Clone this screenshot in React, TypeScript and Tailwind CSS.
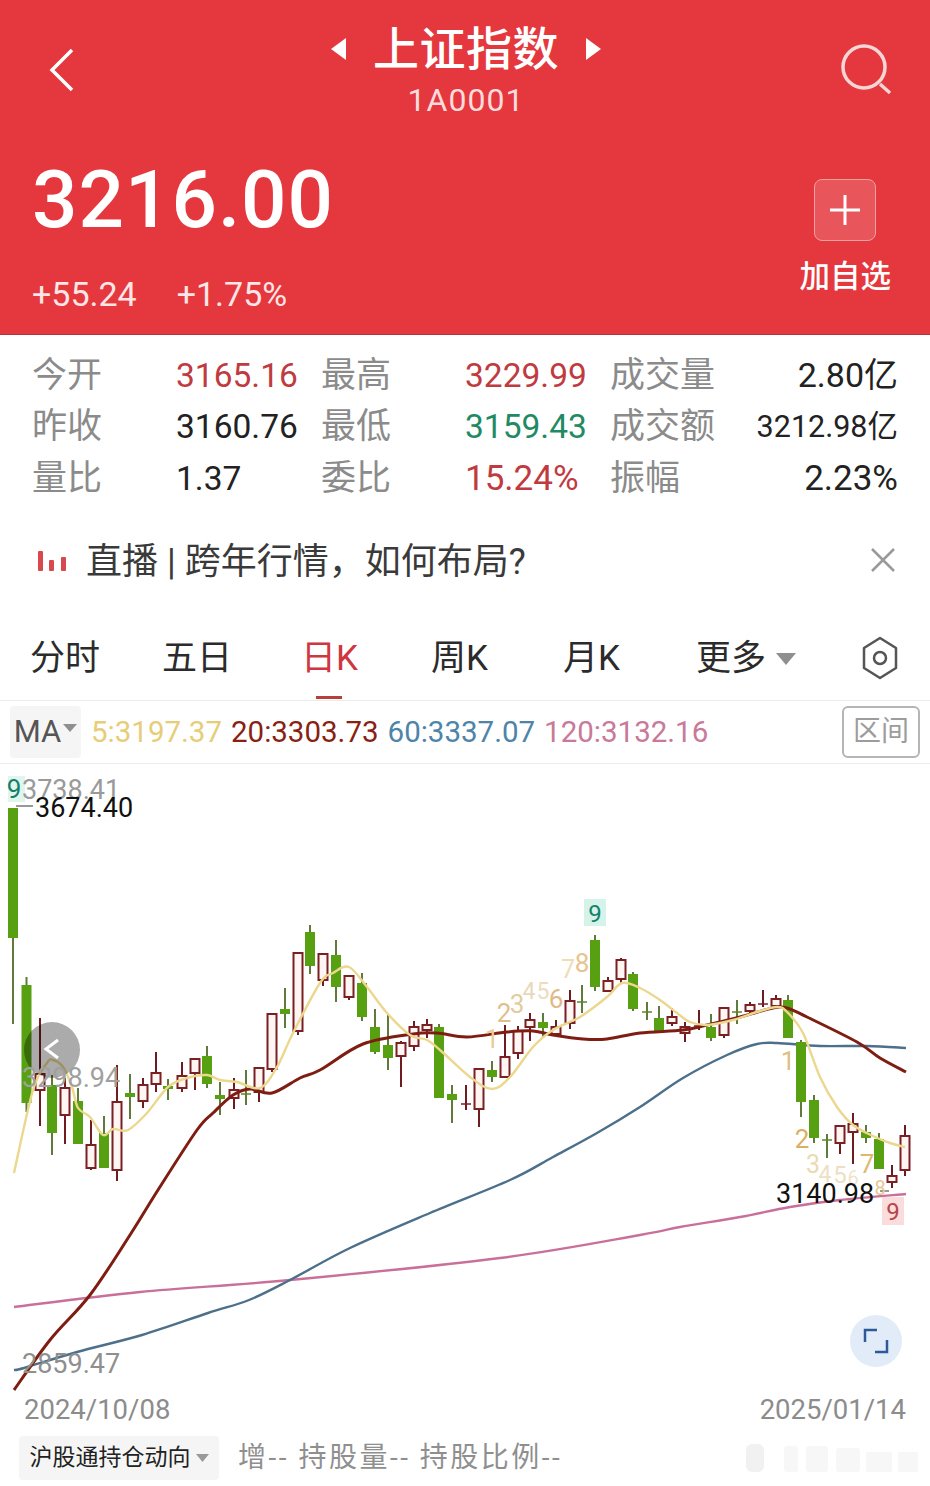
import React from "react";

const CJK = '"Noto Sans CJK SC", "Noto Sans", sans-serif';

type C = [number, number, number, number, number, "r" | "g"];
const candles: C[] = [
  [13, 808, 1024, 808, 938, "g"],
  [26.5, 977, 1112, 985, 1103, "g"],
  [40, 1018, 1126, 1074, 1090, "r"],
  [52, 1075, 1155, 1085, 1133, "g"],
  [65, 1078, 1144, 1088, 1115, "r"],
  [78, 1088, 1144, 1101, 1144, "g"],
  [91, 1120, 1170, 1145, 1168, "r"],
  [104, 1116, 1168, 1133, 1168, "g"],
  [117, 1065, 1181, 1102, 1170, "r"],
  [130, 1074, 1119, 1093, 1097, "g"],
  [143, 1078, 1108, 1085, 1101, "r"],
  [156, 1052, 1092, 1073, 1084, "r"],
  [168, 1079, 1100, 1086, 1089, "g"],
  [182, 1062, 1092, 1076, 1088, "r"],
  [195, 1059, 1090, 1059, 1073, "r"],
  [207, 1046, 1088, 1056, 1084, "g"],
  [220, 1082, 1115, 1095, 1099, "g"],
  [234, 1078, 1109, 1090, 1098, "r"],
  [246, 1070, 1105, 1094, 1095, "g"],
  [259, 1068, 1102, 1068, 1092, "r"],
  [272, 1014, 1072, 1014, 1069, "r"],
  [285, 988, 1028, 1009, 1014, "g"],
  [298, 953, 1035, 953, 1031, "r"],
  [310, 925, 974, 932, 966, "g"],
  [323, 954, 986, 954, 980, "r"],
  [336, 940, 1002, 955, 987, "g"],
  [349, 976, 1000, 976, 997, "r"],
  [362, 973, 1021, 983, 1017, "g"],
  [375, 1009, 1054, 1027, 1052, "g"],
  [388, 1014, 1070, 1045, 1058, "g"],
  [401, 1041, 1087, 1043, 1056, "r"],
  [414, 1021, 1051, 1027, 1046, "r"],
  [427, 1019, 1038, 1025, 1030, "r"],
  [439, 1024, 1098, 1027, 1098, "g"],
  [452, 1085, 1123, 1094, 1100, "g"],
  [466, 1085, 1110, 1104, 1105, "r"],
  [479, 1068, 1127, 1069, 1109, "r"],
  [492, 1061, 1082, 1070, 1077, "g"],
  [505, 1025, 1078, 1057, 1077, "r"],
  [518, 1026, 1059, 1031, 1053, "r"],
  [530, 1013, 1041, 1020, 1027, "r"],
  [543, 1013, 1037, 1022, 1028, "g"],
  [556, 1020, 1034, 1027, 1034, "r"],
  [570, 990, 1029, 1001, 1023, "r"],
  [582, 985, 1013, 1002, 1003, "g"],
  [595, 935, 991, 940, 987, "g"],
  [608, 977, 991, 981, 991, "r"],
  [621, 958, 983, 960, 979, "r"],
  [633, 972, 1011, 974, 1009, "g"],
  [647, 1002, 1020, 1012, 1013, "g"],
  [659, 1006, 1032, 1018, 1032, "g"],
  [672, 1008, 1026, 1017, 1023, "r"],
  [685, 1022, 1042, 1027, 1033, "r"],
  [699, 1010, 1030, 1026, 1027, "r"],
  [711, 1014, 1041, 1027, 1038, "g"],
  [724, 1008, 1038, 1008, 1035, "r"],
  [737, 1000, 1024, 1012, 1013, "g"],
  [750, 1002, 1014, 1005, 1011, "r"],
  [763, 990, 1007, 1004, 1005, "r"],
  [776, 995, 1008, 999, 1006, "r"],
  [788, 995, 1038, 1000, 1038, "g"],
  [801, 1040, 1117, 1042, 1102, "g"],
  [814, 1095, 1143, 1100, 1138, "g"],
  [827, 1134, 1158, 1140, 1141, "g"],
  [840, 1126, 1154, 1126, 1143, "r"],
  [853, 1113, 1164, 1124, 1132, "r"],
  [866, 1125, 1143, 1132, 1138, "g"],
  [879, 1133, 1169, 1139, 1169, "g"],
  [892, 1165, 1188, 1176, 1182, "r"],
  [905, 1125, 1176, 1136, 1170, "r"],
];

const ma5 = "14,1173 33,1090 47,1063 53,1060 63,1067 72,1087 78,1108 90,1117 103,1135 113,1129 128,1130 147,1113 168,1087 187,1078 207,1075 220,1080 237,1082 260,1088 277,1067 293,1033 320,983 333,973 349,967 367,987 387,1013 410,1035 427,1040 440,1050 470,1077 492,1089 510,1077 533,1047 553,1030 580,1017 607,997 622,983 640,988 660,1000 677,1013 690,1022 707,1025 733,1020 757,1012 777,1007 787,1012 803,1033 820,1077 837,1107 853,1125 873,1136 890,1143 905,1147";
const ma20 = "14,1390 50,1340 90,1295 130,1235 158,1190 197,1130 213,1113 233,1095 250,1089 272,1093 300,1078 320,1070 363,1044 413,1034 437,1033 467,1037 507,1032 533,1031 553,1035 583,1039 607,1039 640,1033 683,1030 707,1025 740,1017 773,1008 787,1008 807,1017 857,1042 880,1058 906,1072";
const ma60 = "14,1370 24,1368 77,1352 142,1335 208,1313 249,1300 290,1280 350,1248 430,1213 510,1180 553,1157 597,1133 640,1107 683,1078 727,1055 757,1044 777,1043 820,1046 867,1046 906,1048";
const ma120 = "14,1307 140,1292 290,1280 500,1258 640,1235 680,1227 740,1217 790,1207 840,1200 906,1194";

function smooth(points: string) {
  const p = points.split(" ").map((s) => s.split(",").map(Number));
  let d = `M${p[0][0]} ${p[0][1]}`;
  for (let i = 0; i < p.length - 1; i++) {
    const a = p[Math.max(i - 1, 0)];
    const b = p[i];
    const c = p[i + 1];
    const e = p[Math.min(i + 2, p.length - 1)];
    d += ` C${b[0] + (c[0] - a[0]) / 6} ${b[1] + (c[1] - a[1]) / 6} ${c[0] - (e[0] - b[0]) / 6} ${c[1] - (e[1] - b[1]) / 6} ${c[0]} ${c[1]}`;
  }
  return d;
}

const seq: [string, number, number, number, string][] = [
  ["1", 492, 1048, 25, "#eccb95"],
  ["2", 504, 1022, 26, "#e0bf8c"],
  ["3", 517, 1013, 26, "#e3cba0"],
  ["4", 529, 999, 23, "#e9d8b8"],
  ["5", 543, 999, 23, "#ecdcc0"],
  ["6", 556, 1008, 26, "#dfba86"],
  ["7", 568, 978, 25, "#eedcb8"],
  ["8", 582, 972, 26, "#e5c48f"],
  ["1", 788, 1070, 26, "#dfc080"],
  ["2", 802, 1148, 26, "#dcae62"],
  ["3", 813, 1173, 25, "#ecd9b0"],
  ["4", 825, 1182, 23, "#eedfc2"],
  ["5", 840, 1183, 24, "#eedfc2"],
  ["6", 853, 1185, 20, "#f0e4cc"],
  ["7", 867, 1173, 26, "#dfb870"],
  ["8", 880, 1195, 20, "#e7c88f"],
];

function StatRow({ a, av, ac, avs, b, bv, bc, bvs, c, cv, cvs }: { a: string; av: string; ac: string; avs?: string; b: string; bv: string; bc: string; bvs?: string; c: string; cv: string; cvs: string }) {
  return (
    <div className="flex h-[51.5px] items-center">
      <span className="w-[144px] text-[35px] text-[#8b8b8b]">{a}</span>
      <span className={`w-[145px] ${avs ?? "text-[33.5px]"}`} style={{ color: ac }}>{av}</span>
      <span className="w-[144px] text-[35px] text-[#8b8b8b]">{b}</span>
      <span className={`w-[145px] ${bvs ?? "text-[33.5px]"}`} style={{ color: bc }}>{bv}</span>
      <span className="w-[120px] text-[35px] text-[#8b8b8b]">{c}</span>
      <span className={`ml-auto ${cvs} text-[#222222]`}>{cv}</span>
    </div>
  );
}

function Tab({ children, active, w }: { children: React.ReactNode; active?: boolean; w: string }) {
  return (
    <div className={`${w} relative flex h-full items-center pt-[2px] text-[35px] ${active ? "text-[#cf3640]" : "text-[#2b2b2b]"}`}>
      {children}
      {active && <div className="absolute bottom-[1px] left-0 ml-[15px] h-[3px] w-[26px] bg-[#b5403c]" />}
    </div>
  );
}

export default function App() {
  return (
    <div className="flex h-[1486px] w-[930px] flex-col overflow-hidden bg-white" style={{ fontFamily: `Roboto, ${CJK}` }}>
      <header className="h-[335px] shrink-0 border-b border-[#b8343a] bg-[#e4383e] text-white">
        <div className="grid h-[154px] grid-cols-[1fr_auto_1fr] items-start pl-[48px] pr-[36px] pt-[19px]">
          <svg width="28" height="46" viewBox="0 0 28 46" className="mt-[28px]" fill="none" stroke="#fff" strokeWidth="3.5">
            <path d="M24 3 L4 23 L24 43" />
          </svg>
          <div className="-ml-[10px] flex flex-col items-center">
            <div className="flex items-center gap-[26px]">
              <svg width="17" height="24" viewBox="0 0 17 24" fill="#fff"><path d="M16 1 V23 L1 12 Z" /></svg>
              <span className="text-[46px] font-medium leading-[60px] tracking-[0.5px]">上证指数</span>
              <svg width="17" height="24" viewBox="0 0 17 24" fill="#fff"><path d="M1 1 V23 L16 12 Z" /></svg>
            </div>
            <span className="mt-[1px] text-[32px] leading-[40px] tracking-[1px] text-[#ffdcdc]">1A0001</span>
          </div>
          <svg width="54" height="54" viewBox="0 0 54 54" className="mt-[24px] justify-self-end" fill="none" stroke="#f6d5d5" strokeWidth="3.5">
            <circle cx="24" cy="24" r="21" />
            <path d="M40 41 L50 50" />
          </svg>
        </div>
        <div className="flex justify-between pl-[32px] pr-[39px]">
          <div>
            <div className="text-[80px] font-medium leading-[92px] tracking-[1px]">3216.00</div>
            <div className="mt-[28px] flex gap-[40px] text-[34px] leading-[40px] text-[#ffe6e6]">
              <span>+55.24</span>
              <span>+1.75%</span>
            </div>
          </div>
          <div className="flex flex-col items-center pt-[25px]">
            <div className="flex h-[62px] w-[62px] items-center justify-center rounded-[8px] border border-[#f3a0a3] bg-[#e8555a]">
              <svg width="32" height="32" viewBox="0 0 32 32" stroke="#fff" strokeWidth="3"><path d="M16 1 V31 M1 16 H31" /></svg>
            </div>
            <span className="mt-[16px] text-[30.5px] font-medium leading-[40px]">加自选</span>
          </div>
        </div>
      </header>

      <section className="shrink-0 pl-[32px] pr-[32px] pt-[15px]">
        <StatRow a="今开" av="3165.16" ac="#bf3b3f" b="最高" bv="3229.99" bc="#bf3b3f" c="成交量" cv="2.80亿" cvs="text-[34px]" />
        <StatRow a="昨收" av="3160.76" ac="#222222" b="最低" bv="3159.43" bc="#1f8a63" c="成交额" cv="3212.98亿" cvs="text-[30.5px]" />
        <StatRow a="量比" av="1.37" ac="#222222" b="委比" bv="15.24%" bc="#bf3b3f" bvs="text-[35px]" c="振幅" cv="2.23%" cvs="text-[35px]" />
      </section>

      <div className="flex h-[100px] shrink-0 items-center pl-[38px] pr-[34px] pt-[15px]">
        <svg width="28" height="22" viewBox="0 0 28 22" fill="#d9484d">
          <rect x="0" y="0" width="5" height="20" rx="1" />
          <rect x="11" y="9" width="5" height="11" rx="1" />
          <rect x="23" y="6" width="5" height="14" rx="1" />
        </svg>
        <span className="ml-[20px] text-[36px] text-[#3a3a3a]">直播 | 跨年行情，如何布局?</span>
        <svg width="26" height="26" viewBox="0 0 26 26" className="mb-[4px] ml-auto" stroke="#9a9a9a" strokeWidth="2.5"><path d="M2 2 L24 24 M24 2 L2 24" /></svg>
      </div>

      <nav className="flex h-[95.5px] shrink-0 items-center pl-[30px] pr-[25px] pt-[12px]">
        <Tab w="w-[132px]">分时</Tab>
        <Tab w="w-[139px]">五日</Tab>
        <Tab w="w-[130px]" active>日K</Tab>
        <Tab w="w-[132px]">周K</Tab>
        <Tab w="w-[133px]">月K</Tab>
        <Tab w="w-[165px]">
          更多
          <svg width="20" height="12" viewBox="0 0 20 12" className="ml-[10px]" fill="#8f8f8f"><path d="M0 0 H20 L10 12 Z" /></svg>
        </Tab>
        <svg width="38" height="44" viewBox="0 0 38 44" fill="none" stroke="#555" strokeWidth="2.5">
          <path d="M19 2 L35 12 V32 L19 42 L3 32 V12 Z" strokeLinejoin="round" />
          <circle cx="19" cy="22" r="6" />
        </svg>
      </nav>

      <div className="flex h-[64px] shrink-0 items-center border-y border-[#ececec] pr-[10px]">
        <div className="ml-[10px] flex h-[52px] w-[71px] items-center justify-center rounded-[4px] bg-[#f5f5f5] text-[31px] text-[#555555]">
          MA
          <svg width="14" height="8" viewBox="0 0 14 8" className="mb-[8px] ml-[2px]" fill="#8f8f8f"><path d="M0 0 H14 L7 8 Z" /></svg>
        </div>
        <div className="ml-[10px] flex gap-[9px] text-[29.5px]">
          <span className="text-[#e6cd78]">5:3197.37</span>
          <span className="text-[#8a1f14]">20:3303.73</span>
          <span className="text-[#4d84a8]">60:3337.07</span>
          <span className="text-[#c9799a]">120:3132.16</span>
        </div>
        <div className="ml-auto flex h-[52px] w-[78px] items-center justify-center rounded-[6px] border-2 border-[#b5b5b5] text-[28px] text-[#9c9c9c]">区间</div>
      </div>

      <main className="relative grow">
        <svg width="930" height="630" viewBox="0 764 930 630" className="block" fill="none">
          <path d={smooth(ma120)} stroke="#c9709a" strokeWidth="2.4" />
          <path d={smooth(ma60)} stroke="#4c6f8a" strokeWidth="2.4" />
          {candles.map(([x, t, b, bt, bb, k], i) => {
            const stroke = k === "g" ? "#5a8a22" : "#7a1f22";
            const h = bb - bt;
            return (
              <g key={i}>
                <line x1={x} x2={x} y1={t} y2={b} stroke={k === "g" ? "#5f7a3a" : "#6f1c20"} strokeWidth="2" />
                {h < 2 ? (
                  <line x1={x - 5} x2={x + 5} y1={bt} y2={bt} stroke={stroke} strokeWidth="1.5" />
                ) : k === "g" ? (
                  <rect x={x - 5} y={bt} width="10" height={h} fill="#57a011" />
                ) : (
                  <rect x={x - 4.5} y={bt} width="9" height={h} fill="#fff5f3" stroke={stroke} strokeWidth="2" />
                )}
              </g>
            );
          })}
          <path d={smooth(ma20)} stroke="#7f1d12" strokeWidth="3" />
          <path d={smooth(ma5)} stroke="#ecd78e" strokeWidth="2.4" />
          <rect x="8" y="776" width="17" height="26" fill="#dff5ee" />
          <rect x="584" y="899" width="22" height="27" fill="#d6f3ea" />
          <rect x="882" y="1197" width="22" height="28" fill="#fbdcdc" />
          <line x1="16" x2="33" y1="806" y2="806" stroke="#777" strokeWidth="1.5" />
          <line x1="880" x2="889" y1="1191" y2="1191" stroke="#777" strokeWidth="1.5" />
          <circle cx="52" cy="1050" r="28" fill="#000" opacity="0.33" />
          <path d="M58 1040 L46 1049 L58 1058" stroke="#fff" strokeWidth="3" />
          {seq.map(([n, x, y, s, c], i) => (
            <text key={i} x={x} y={y} fontSize={s} fill={c} textAnchor="middle" fontFamily="Roboto, sans-serif">{n}</text>
          ))}
          <g fontFamily="Roboto, sans-serif">
            <text x="14" y="798" fontSize="26" fill="#15806a" textAnchor="middle">9</text>
            <text x="595" y="922" fontSize="24" fill="#15806a" textAnchor="middle">9</text>
            <text x="893" y="1220" fontSize="24" fill="#b5454a" textAnchor="middle">9</text>
            <text x="22" y="799" fontSize="27" fill="#9a9a9a">3738.41</text>
            <text x="35" y="817" fontSize="27" fill="#111">3674.40</text>
            <text x="22" y="1087" fontSize="27" fill="#a0a0a0">3298.94</text>
            <text x="776" y="1203" fontSize="27" fill="#111">3140.98</text>
            <text x="22" y="1373" fontSize="27" fill="#8f8f8f">2859.47</text>
          </g>
        </svg>
        <div className="absolute right-[28px] top-[551px] flex h-[52px] w-[52px] items-center justify-center rounded-full bg-[#e2ecf8]">
          <svg width="26" height="26" viewBox="0 0 26 26" fill="none" stroke="#2f5a9a" strokeWidth="2.5">
            <path d="M14 2 H2 V14 M12 24 H24 V12" />
          </svg>
        </div>
        <div className="flex justify-between pl-[24px] pr-[24px] text-[27.5px] leading-[32px] text-[#8c8c8c]">
          <span>2024/10/08</span>
          <span>2025/01/14</span>
        </div>
        <div className="mt-[10px] flex items-center pl-[19px]">
          <div className="flex h-[44px] w-[200px] items-center justify-center rounded-[4px] bg-[#f5f5f5] text-[23px] text-[#222222]">
            沪股通持仓动向
            <svg width="13" height="8" viewBox="0 0 13 8" className="ml-[5px]" fill="#999"><path d="M0 0 H13 L6.5 8 Z" /></svg>
          </div>
          <span className="ml-[19px] text-[28px] tracking-[2.5px] text-[#8f8f8f]">增-- 持股量-- 持股比例--</span>
          <svg width="196" height="28" viewBox="0 0 196 28" className="ml-auto mr-[8px]" fill="#f7f7f7">
            <rect x="20" y="0" width="18" height="28" rx="6" fill="#f1f1f1" />
            <rect x="58" y="2" width="14" height="26" rx="3" />
            <rect x="80" y="2" width="22" height="26" rx="3" />
            <rect x="110" y="4" width="24" height="24" rx="3" />
            <rect x="140" y="8" width="26" height="20" rx="2" />
            <rect x="172" y="8" width="20" height="20" rx="2" />
          </svg>
        </div>
      </main>
    </div>
  );
}
